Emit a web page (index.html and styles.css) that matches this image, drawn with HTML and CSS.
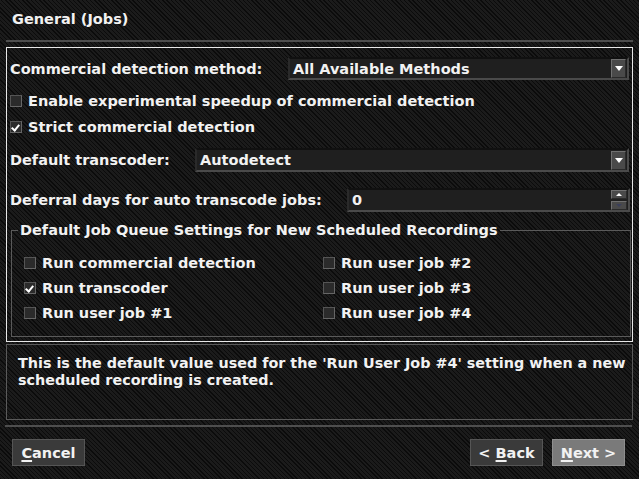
FILE: index.html
```html
<!DOCTYPE html>
<html>
<head>
<meta charset="utf-8">
<link rel="stylesheet" href="styles.css">
</head>
<body>
<div class="page">
  <div class="header">General (Jobs)</div>
  <div class="rule"></div>
  <div class="main">
    <div class="row r1">
      <span class="label l1">Commercial detection method:</span>
      <div class="combo c1"><span class="val">All Available Methods</span><span class="arrow"><span class="tri"></span></span></div>
    </div>
    <div class="row chkrow r2"><span class="chk"></span><span>Enable experimental speedup of commercial detection</span></div>
    <div class="row chkrow r3"><span class="chk on"></span><span>Strict commercial detection</span></div>
    <div class="row r4">
      <span class="label l4">Default transcoder:</span>
      <div class="combo c4"><span class="val">Autodetect</span><span class="arrow"><span class="tri"></span></span></div>
    </div>
    <div class="row r5">
      <span class="label l5">Deferral days for auto transcode jobs:</span>
      <div class="spin"><span class="val">0</span><span class="spinbtns"><span class="sb"><span class="up"></span></span><span class="sb"><span class="down"></span></span></span></div>
    </div>
    <fieldset class="group">
      <legend>Default Job Queue Settings for New Scheduled Recordings</legend>
      <div class="grid">
        <div class="gitem"><span class="chk"></span><span>Run commercial detection</span></div>
        <div class="gitem"><span class="chk"></span><span>Run user job #2</span></div>
        <div class="gitem"><span class="chk on"></span><span>Run transcoder</span></div>
        <div class="gitem"><span class="chk"></span><span>Run user job #3</span></div>
        <div class="gitem"><span class="chk"></span><span>Run user job #1</span></div>
        <div class="gitem"><span class="chk"></span><span>Run user job #4</span></div>
      </div>
    </fieldset>
  </div>
  <div class="help">This is the default value used for the 'Run User Job #4' setting when a new scheduled recording is created.</div>
  <div class="rule bottom"></div>
  <div class="buttons">
    <div class="btn"><span><u>C</u>ancel</span></div>
    <div class="spacer"></div>
    <div class="btn"><span>&lt; <u>B</u>ack</span></div>
    <div class="btn next"><span><u>N</u>ext &gt;</span></div>
  </div>
</div>
</body>
</html>
```
FILE: styles.css
```css
html, body {
  margin: 0;
  padding: 0;
}
body {
  width: 639px;
  height: 479px;
  overflow: hidden;
  background-color: #141414;
  background-image: repeating-linear-gradient(45deg, #0b0b0b 0px, #0b0b0b 1px, #1b1b1b 1px, #1b1b1b 3px);
  font-family: "DejaVu Sans", sans-serif;
  font-weight: bold;
  font-size: 14.5px;
  color: #f2f2f2;
}
.page {
  display: flex;
  flex-direction: column;
}
.header {
  height: 40px;
  line-height: 38px;
  padding-left: 12px;
}
.rule {
  height: 2px;
  margin: 0 6px 0 6px;
  background: #4e4e4e;
}
.main {
  box-sizing: border-box;
  margin: 5px 0 0 6px;
  width: 627px;
  height: 295px;
  border: 1px solid #e8e8e8;
  padding: 9px 0 0 3px;
  display: flex;
  flex-direction: column;
}
.row {
  display: flex;
  align-items: center;
}
.r1 { height: 23px; }
.r2 { height: 20px; margin-top: 11px; }
.r3 { height: 20px; margin-top: 6px; }
.r4 { height: 24px; margin-top: 11px; }
.r5 { height: 24px; margin-top: 16px; }
.label { flex: none; white-space: nowrap; }
.l1 { width: 278px; }
.l4 { width: 185px; }
.l5 { width: 337px; }
.combo, .spin {
  box-sizing: border-box;
  height: 100%;
  background: #1f1f1f;
  border: 2px solid #3c3c3c;
  border-top-color: #101010;
  border-left-color: #2a2a2a;
  border-right-color: #4a4a4a;
  border-bottom-color: #4a4a4a;
  display: flex;
  align-items: center;
  padding-left: 3px;
}
.c1 { width: 341px; }
.c4 { width: 434px; }
.spin { width: 283px; }
.val { flex: 1; white-space: nowrap; }
.arrow {
  box-sizing: border-box;
  width: 15px;
  height: 19px;
  margin-right: 1px;
  background: #4a4a4a;
  border: 1px solid #707070;
  border-right-color: #2a2a2a;
  border-bottom-color: #2a2a2a;
  display: flex;
  align-items: center;
  justify-content: center;
}
.tri {
  width: 0;
  height: 0;
  border-left: 4px solid transparent;
  border-right: 4px solid transparent;
  border-top: 5px solid #ffffff;
}
.spinbtns {
  display: flex;
  flex-direction: column;
  gap: 2px;
  margin-right: 1px;
}
.sb {
  box-sizing: border-box;
  width: 16px;
  height: 9px;
  background: #4a4a4a;
  border: 1px solid #707070;
  border-right-color: #2a2a2a;
  border-bottom-color: #2a2a2a;
  display: flex;
  align-items: center;
  justify-content: center;
}
.up {
  width: 0;
  height: 0;
  border-left: 3px solid transparent;
  border-right: 3px solid transparent;
  border-bottom: 3px solid #ffffff;
}
.down {
  width: 0;
  height: 0;
  border-left: 3px solid transparent;
  border-right: 3px solid transparent;
  border-top: 3px solid #3a3f5a;
}
.chkrow { gap: 6px; }
.chk {
  box-sizing: border-box;
  flex: none;
  width: 12px;
  height: 12px;
  background: #2b2b2b;
  border: 1px solid #666666;
  border-top-color: #555555;
  border-left-color: #555555;
  position: relative;
}
.chk.on::after {
  content: "";
  position: absolute;
  left: 2px;
  top: 1px;
  width: 3px;
  height: 6px;
  border-right: 2px solid #ffffff;
  border-bottom: 2px solid #ffffff;
  transform: rotate(40deg);
  transform-origin: center;
}
.group {
  box-sizing: border-box;
  margin: 10px 0 0 1px;
  width: 620px;
  border: 1px solid #5a5a5a;
  padding: 11px 0 11px 12px;
  min-width: 0;
}
.group legend {
  margin-left: -6px;
  padding: 0 2px;
  line-height: 17px;
}
.grid {
  display: grid;
  grid-template-columns: 299px 1fr;
  grid-auto-rows: 25px;
}
.gitem {
  display: flex;
  align-items: center;
  gap: 6px;
}
.help {
  box-sizing: border-box;
  margin: 2px 0 0 6px;
  width: 627px;
  height: 76px;
  border: 1px solid #5a5a5a;
  padding: 10px 0 0 11px;
  font-size: 14.35px;
  line-height: 17px;
}
.rule.bottom {
  margin: 5px 7px 0 5px;
}
.buttons {
  display: flex;
  margin-top: 12px;
  padding: 0 14px 0 12px;
  gap: 9px;
}
.spacer { flex: 1; }
.btn {
  box-sizing: border-box;
  width: 73px;
  height: 27px;
  background: #3a3a3a;
  border: 1px solid #555555;
  display: flex;
  align-items: center;
  justify-content: center;
  white-space: nowrap;
}
.btn u {
  text-decoration-thickness: 2px;
  text-underline-offset: 2px;
}
.btn.next {
  background: #7a7a7a;
  border-color: #8e8e8e;
}
```
